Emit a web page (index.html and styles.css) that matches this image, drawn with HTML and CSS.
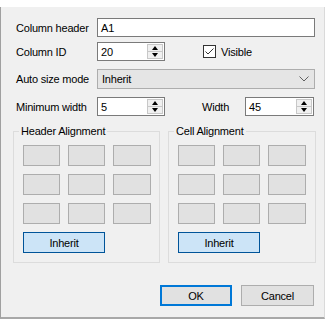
FILE: index.html
```html
<!DOCTYPE html>
<html lang="en">
<head>
    <meta charset="UTF-8">
    <title>Column properties</title>
    <link rel="stylesheet" href="styles.css">
</head>
<body>
    <div class="window">
        <div class="row row-first">
            <label class="label">Column header</label>
            <div class="textbox wide">A1</div>
        </div>
        <div class="row row-id">
            <label class="label">Column ID</label>
            <div class="textbox spin">
                <span class="value">20</span>
                <span class="spinner"><span class="up"></span><span class="down"></span></span>
            </div>
            <label class="check">
                <svg width="13" height="13" viewBox="0 0 13 13"><rect x="0.5" y="0.5" width="12" height="12" fill="#fff" stroke="#333"/><path d="M2.5 6.5 L5 9 L10.5 3.5" fill="none" stroke="#333" stroke-width="1"/></svg>
                Visible
            </label>
        </div>
        <div class="row row-combo">
            <label class="label">Auto size mode</label>
            <div class="combo wide">
                <span class="value">Inherit</span>
                <svg width="10" height="6" viewBox="0 0 10 6"><path d="M0.5 0.5 L5 5 L9.5 0.5" fill="none" stroke="#606060"/></svg>
            </div>
        </div>
        <div class="row row-width">
            <label class="label">Minimum width</label>
            <div class="textbox spin">
                <span class="value">5</span>
                <span class="spinner"><span class="up"></span><span class="down"></span></span>
            </div>
            <label class="label-width">Width</label>
            <div class="textbox spin spin-right">
                <span class="value">45</span>
                <span class="spinner"><span class="up"></span><span class="down"></span></span>
            </div>
        </div>

        <div class="groups">
            <fieldset class="group">
                <legend>Header Alignment</legend>
                <div class="cells">
                    <div class="cell"></div><div class="cell"></div><div class="cell"></div>
                    <div class="cell"></div><div class="cell"></div><div class="cell"></div>
                    <div class="cell"></div><div class="cell"></div><div class="cell"></div>
                </div>
                <div class="inherit">Inherit</div>
            </fieldset>
            <fieldset class="group group-cell">
                <legend>Cell Alignment</legend>
                <div class="cells">
                    <div class="cell"></div><div class="cell"></div><div class="cell"></div>
                    <div class="cell"></div><div class="cell"></div><div class="cell"></div>
                    <div class="cell"></div><div class="cell"></div><div class="cell"></div>
                </div>
                <div class="inherit">Inherit</div>
            </fieldset>
        </div>

        <div class="buttons">
            <div class="btn btn-ok">OK</div>
            <div class="btn">Cancel</div>
        </div>
    </div>
</body>
</html>
```

FILE: styles.css
```css
body {
    margin: 0;
    background: #fff;
    font-family: "Liberation Sans", Arial, sans-serif;
    font-size: 11px;
    letter-spacing: -0.2px;
    color: #000;
}
.window {
    margin-top: 7px;
    height: 312px;
    width: 325px;
    background: #f0f0f0;
    border-left: 1px solid #a0a0a0;
    border-right: 1px solid #dadada;
    border-bottom: 2px solid #a8a8a8;
    padding: 11px 0 0 15px;
    box-sizing: border-box;
}
.row {
    display: flex;
    align-items: center;
    height: 19px;
}
.row-id {
    margin-top: 5px;
}
.row-combo {
    margin-top: 8px;
    height: 20px;
}
.row-width {
    margin-top: 8px;
}
.label {
    width: 81px;
}
.textbox {
    height: 19px;
    box-sizing: border-box;
    border: 1px solid #7a7a7a;
    background: #fff;
    padding-left: 3px;
    display: flex;
    align-items: center;
}
.wide {
    width: 218px;
}
.spin {
    width: 68px;
    padding-right: 1px;
}
.spin .value {
    flex: 1;
}
.spin-right {
    width: 69px;
}
.spinner {
    width: 16px;
    height: 15px;
    display: flex;
    flex-direction: column;
    background: #f0f0f0;
    border: 1px solid #c8c8c8;
    box-sizing: border-box;
}
.spinner .up, .spinner .down {
    flex: 1;
    display: flex;
    align-items: center;
    justify-content: center;
}
.spinner .up {
    border-bottom: 1px solid #c8c8c8;
}
.spinner .up::after {
    content: "";
    border-left: 3.5px solid transparent;
    border-right: 3.5px solid transparent;
    border-bottom: 4px solid #000;
}
.spinner .down::after {
    content: "";
    border-left: 3.5px solid transparent;
    border-right: 3.5px solid transparent;
    border-top: 4px solid #000;
}
.check {
    display: flex;
    align-items: center;
    gap: 5px;
    margin-left: 38px;
}
.combo {
    height: 20px;
    box-sizing: border-box;
    border: 1px solid #adadad;
    background: #e5e5e5;
    display: flex;
    align-items: center;
    justify-content: space-between;
    padding: 0 5px 0 4px;
}
.label-width {
    margin-left: 37px;
    width: 43px;
}
.groups {
    display: flex;
    gap: 8px;
    margin-top: 8px;
    margin-left: -3px;
}
.group {
    margin: 0;
    width: 147px;
    height: 139px;
    box-sizing: border-box;
    border: 1px solid #dcdcdc;
    padding: 7px 8px 0 9px;
}
.group-cell {
    width: 148px;
}
.group legend {
    padding: 0 2px;
    margin-left: -4px;
    line-height: 14px;
}
.cells {
    display: grid;
    grid-template-columns: 37px 37px 38px;
    grid-auto-rows: 21px;
    gap: 8px;
}
.cell {
    background: #e1e1e1;
    border: 1px solid #adadad;
}
.inherit {
    margin-top: 8px;
    width: 82px;
    height: 21px;
    box-sizing: border-box;
    background: #cce4f7;
    border: 1px solid #005499;
    display: flex;
    align-items: center;
    justify-content: center;
}
.buttons {
    display: flex;
    justify-content: flex-end;
    gap: 9px;
    margin-top: 22px;
    margin-right: 10px;
}
.btn {
    width: 73px;
    height: 21px;
    box-sizing: border-box;
    background: #e1e1e1;
    border: 1px solid #adadad;
    display: flex;
    align-items: center;
    justify-content: center;
}
.btn-ok {
    width: 72px;
    border: 2px solid #0078d7;
}
```
